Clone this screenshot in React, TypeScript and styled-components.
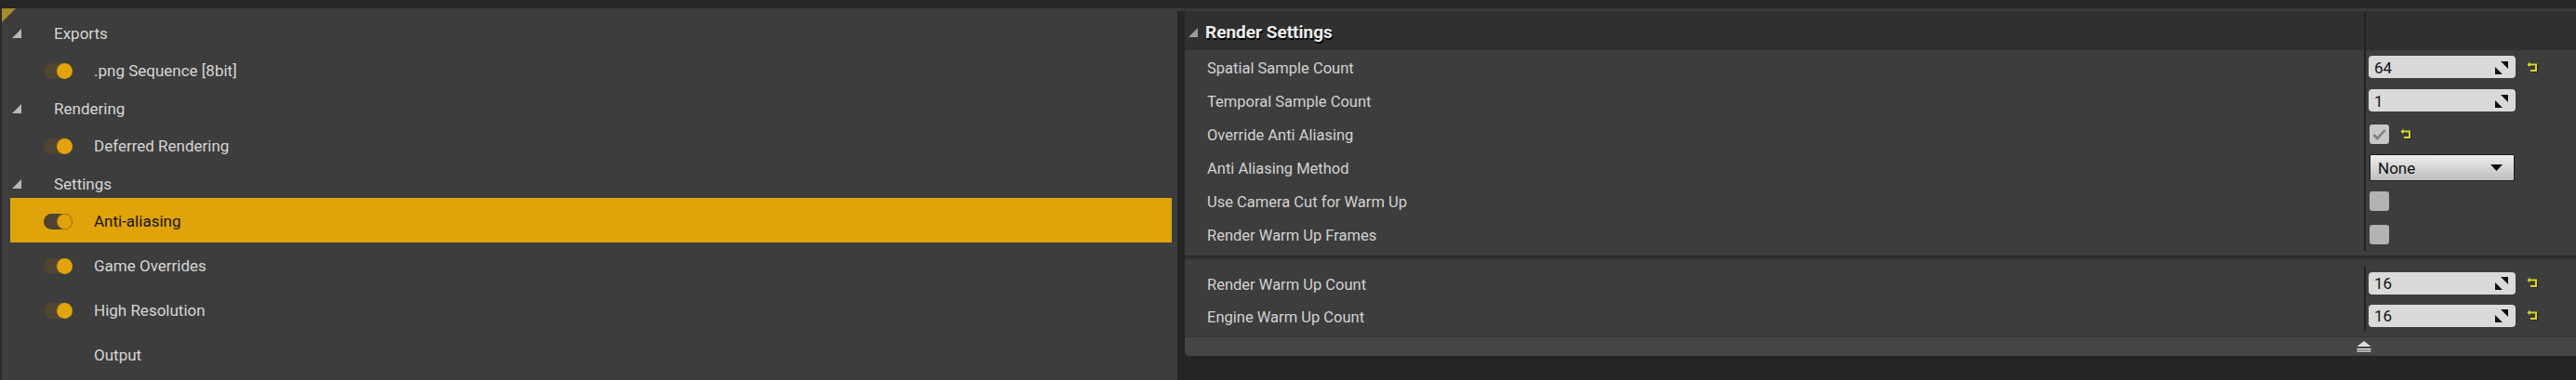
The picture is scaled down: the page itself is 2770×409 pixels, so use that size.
import React from "react";
import styled, { createGlobalStyle } from "styled-components";

const GlobalStyle = createGlobalStyle`
  html, body {
    margin: 0;
    padding: 0;
    background: #252525;
  }
  body {
    width: 2770px;
    height: 409px;
    overflow: hidden;
    font-family: Roboto, "Noto Sans", sans-serif;
  }
`;

const Page = styled.div`
  display: flex;
  flex-direction: column;
  height: 409px;
`;

const TopBar = styled.div`
  flex: none;
  height: 9px;
  background: #262626;
`;

const Main = styled.div`
  display: flex;
  flex: 1;
  min-height: 0;
`;

/* ---------- left outliner ---------- */

const Outliner = styled.div`
  position: relative;
  flex: none;
  width: 1266px;
  box-sizing: border-box;
  background: #3d3d3d;
  border-left: 2px solid #2b2b2b;
  padding: 1.5px 6px 0 9px;
`;

const CornerMark = styled.div`
  position: absolute;
  top: 0;
  left: 0;
  width: 0;
  height: 0;
  border-top: 15px solid #a88a2c;
  border-right: 15px solid transparent;
`;

const OutRow = styled.div<{ $h: number; $shift: number; $selected?: boolean }>`
  display: flex;
  align-items: center;
  box-sizing: border-box;
  height: ${(p) => p.$h}px;
  padding-top: ${(p) => p.$shift * 2}px;
  background: ${(p) => (p.$selected ? "#e0a30a" : "transparent")};
  color: ${(p) => (p.$selected ? "#141414" : "#d6d6d6")};
  font-size: 17px;
`;

const GroupCaret = styled.span`
  width: 0;
  height: 0;
  margin-left: 2px;
  margin-right: 35px;
  border-left: 10px solid transparent;
  border-bottom: 10px solid #b9b9b9;
`;

const Toggle = styled.span<{ $selected?: boolean }>`
  position: relative;
  flex: none;
  width: 31px;
  height: 17px;
  margin-left: 36px;
  margin-right: 23px;
  border-radius: 9px;
  background: ${(p) => (p.$selected ? "#4d4330" : "#4f4530")};

  &::after {
    content: "";
    position: absolute;
    right: 0;
    top: 0;
    width: 17px;
    height: 17px;
    box-sizing: border-box;
    border-radius: 50%;
    background: ${(p) => (p.$selected ? "#dfa20b" : "#e2a40a")};
    border: ${(p) => (p.$selected ? "1px solid #b48208" : "none")};
  }
`;

const Spacer = styled.span`
  flex: none;
  width: 90px;
`;

/* ---------- right details ---------- */

const DetailsArea = styled.div`
  flex: 1;
  display: flex;
  flex-direction: column;
  border-top: 3px solid #393939;
  padding-left: 8px;
`;

const Details = styled.div`
  display: flex;
  flex-direction: column;
  background: #3d3d3d;
  border-radius: 3px 0 0 5px;
  overflow: hidden;
`;

const GridRow = styled.div<{ $h: number; $bg?: string }>`
  display: grid;
  grid-template-columns: 1fr 228px;
  height: ${(p) => p.$h}px;
  background: ${(p) => p.$bg ?? "transparent"};
`;

const LabelCell = styled.div<{ $pad?: number }>`
  display: flex;
  align-items: center;
  padding-left: ${(p) => p.$pad ?? 24}px;
  padding-top: 3px;
  color: #d2d2d2;
  font-size: 16.5px;
  white-space: nowrap;
`;

const ValueCell = styled.div`
  display: flex;
  align-items: center;
  gap: 12px;
  border-left: 2px solid #222222;
  padding-left: 3px;
`;

const HeaderCaret = styled.span`
  width: 0;
  height: 0;
  margin-right: 8px;
  border-left: 10px solid transparent;
  border-bottom: 10px solid #9a9a9a;
`;

const HeaderTitle = styled.span`
  color: #ececec;
  font-size: 19px;
  font-weight: 700;
  text-shadow: 1px 2px 0 #000;
`;

const Group = styled.div<{ $pt?: number; $pb?: number }>`
  padding-top: ${(p) => p.$pt ?? 0}px;
  padding-bottom: ${(p) => p.$pb ?? 0}px;
`;

const GroupGap = styled.div`
  height: 5px;
  background: linear-gradient(#282828, #333333 70%, #393939);
`;

const NumBox = styled.div`
  display: flex;
  align-items: center;
  justify-content: space-between;
  width: 158px;
  height: 24px;
  box-sizing: border-box;
  padding: 1px 8px 0 6px;
  border-radius: 4px;
  background: #dadada;
  color: #121212;
  font-size: 17px;
`;

const Check = styled.div<{ $checked?: boolean }>`
  display: flex;
  align-items: center;
  justify-content: center;
  width: 21px;
  height: 21px;
  margin-left: 1px;
  border-radius: 3px;
  background: ${(p) => (p.$checked ? "#c8c8c8" : "#b3b3b3")};
`;

const Combo = styled.div`
  display: flex;
  align-items: center;
  justify-content: space-between;
  width: 156px;
  height: 29px;
  margin-left: 1px;
  box-sizing: border-box;
  padding: 1px 12px 0 8px;
  border: 1px solid #1c1c1c;
  border-radius: 2px;
  background: linear-gradient(#eeeeee, #d6d6d6 50%, #bdbdbd);
  color: #111;
  font-size: 17px;
`;

const BottomStrip = styled.div`
  display: grid;
  grid-template-columns: 1fr 228px;
  height: 21px;
  box-sizing: border-box;
  background: #454545;
  border-top: 1px solid #363636;
`;

const EjectCell = styled.div`
  display: flex;
  align-items: center;
  justify-content: flex-end;
  margin-right: -8px;
`;

/* ---------- icons ---------- */

const ResetIcon = () => (
  <svg width="13" height="13" viewBox="0 0 13 13">
    <g transform="translate(0.8 0.8)" fill="#1a1a1a" stroke="#1a1a1a">
      <path d="M0.5 3.5 L3.5 0.5 L3.5 6.5 Z" stroke="none" />
      <path d="M3 3.5 H10 V10 H4" fill="none" strokeWidth="2" />
    </g>
    <path d="M0.5 3.5 L3.5 0.5 L3.5 6.5 Z" fill="#d9d92a" />
    <path d="M3 3.5 H10 V10 H4" fill="none" stroke="#d9d92a" strokeWidth="2" />
  </svg>
);

const SpinIcon = () => (
  <svg width="14" height="14" viewBox="0 0 14 14">
    <path d="M6 0 H14 V8 Z" fill="#101010" />
    <path d="M0 6 V14 H8 Z" fill="#101010" />
  </svg>
);

const CheckMark = () => (
  <svg width="15" height="13" viewBox="0 0 15 13">
    <path d="M1.5 7 L5.5 11 L13.5 2" fill="none" stroke="#808080" strokeWidth="2.6" />
  </svg>
);

const ComboArrow = () => (
  <svg width="13" height="7" viewBox="0 0 13 7">
    <path d="M0 0 H13 L6.5 7 Z" fill="#111" />
  </svg>
);

const EjectIcon = () => (
  <svg width="16" height="12" viewBox="0 0 16 12">
    <path d="M8 0 L15.5 6 H0.5 Z" fill="#dedede" />
    <rect x="0.5" y="8" width="15" height="1.6" fill="#dedede" />
    <rect x="0.5" y="10.4" width="15" height="1.6" fill="#bdbdbd" />
  </svg>
);

/* ---------- data ---------- */

type OutItem =
  | { kind: "group"; label: string }
  | { kind: "item"; label: string; toggle: boolean; selected?: boolean; tall?: boolean };

const outline: OutItem[] = [
  { kind: "group", label: "Exports" },
  { kind: "item", label: ".png Sequence [8bit]", toggle: true },
  { kind: "group", label: "Rendering" },
  { kind: "item", label: "Deferred Rendering", toggle: true },
  { kind: "group", label: "Settings" },
  { kind: "item", label: "Anti-aliasing", toggle: true, selected: true, tall: true },
  { kind: "item", label: "Game Overrides", toggle: true, tall: true },
  { kind: "item", label: "High Resolution", toggle: true, tall: true },
  { kind: "item", label: "Output", toggle: false, tall: true },
];

const App = () => {
  return (
    <Page>
      <GlobalStyle />
      <TopBar />
      <Main>
        <Outliner>
          <CornerMark />
          {outline.map((row) =>
            row.kind === "group" ? (
              <OutRow key={row.label} $h={40.5} $shift={5}>
                <GroupCaret />
                {row.label}
              </OutRow>
            ) : (
              <OutRow
                key={row.label}
                $h={row.tall ? 48 : 40.5}
                $shift={row.tall ? 1 : 5}
                $selected={row.selected}
              >
                {row.toggle ? <Toggle $selected={row.selected} /> : <Spacer />}
                {row.label}
              </OutRow>
            )
          )}
        </Outliner>

        <DetailsArea>
          <Details>
            <GridRow $h={42} $bg="#303030">
              <LabelCell $pad={4}>
                <HeaderCaret />
                <HeaderTitle>Render Settings</HeaderTitle>
              </LabelCell>
              <ValueCell />
            </GridRow>

            <Group $pb={5}>
              <GridRow $h={36}>
                <LabelCell>Spatial Sample Count</LabelCell>
                <ValueCell>
                  <NumBox>64<SpinIcon /></NumBox>
                  <ResetIcon />
                </ValueCell>
              </GridRow>
              <GridRow $h={36}>
                <LabelCell>Temporal Sample Count</LabelCell>
                <ValueCell>
                  <NumBox>1<SpinIcon /></NumBox>
                </ValueCell>
              </GridRow>
              <GridRow $h={36}>
                <LabelCell>Override Anti Aliasing</LabelCell>
                <ValueCell>
                  <Check $checked><CheckMark /></Check>
                  <ResetIcon />
                </ValueCell>
              </GridRow>
              <GridRow $h={36}>
                <LabelCell>Anti Aliasing Method</LabelCell>
                <ValueCell>
                  <Combo>None<ComboArrow /></Combo>
                </ValueCell>
              </GridRow>
              <GridRow $h={36}>
                <LabelCell>Use Camera Cut for Warm Up</LabelCell>
                <ValueCell>
                  <Check />
                </ValueCell>
              </GridRow>
              <GridRow $h={36}>
                <LabelCell>Render Warm Up Frames</LabelCell>
                <ValueCell>
                  <Check />
                </ValueCell>
              </GridRow>
            </Group>

            <GroupGap />

            <Group $pt={7} $pb={5}>
              <GridRow $h={35}>
                <LabelCell>Render Warm Up Count</LabelCell>
                <ValueCell>
                  <NumBox>16<SpinIcon /></NumBox>
                  <ResetIcon />
                </ValueCell>
              </GridRow>
              <GridRow $h={35}>
                <LabelCell>Engine Warm Up Count</LabelCell>
                <ValueCell>
                  <NumBox>16<SpinIcon /></NumBox>
                  <ResetIcon />
                </ValueCell>
              </GridRow>
            </Group>

            <BottomStrip>
              <EjectCell>
                <EjectIcon />
              </EjectCell>
              <div />
            </BottomStrip>
          </Details>
        </DetailsArea>
      </Main>
    </Page>
  );
};

export default App;
